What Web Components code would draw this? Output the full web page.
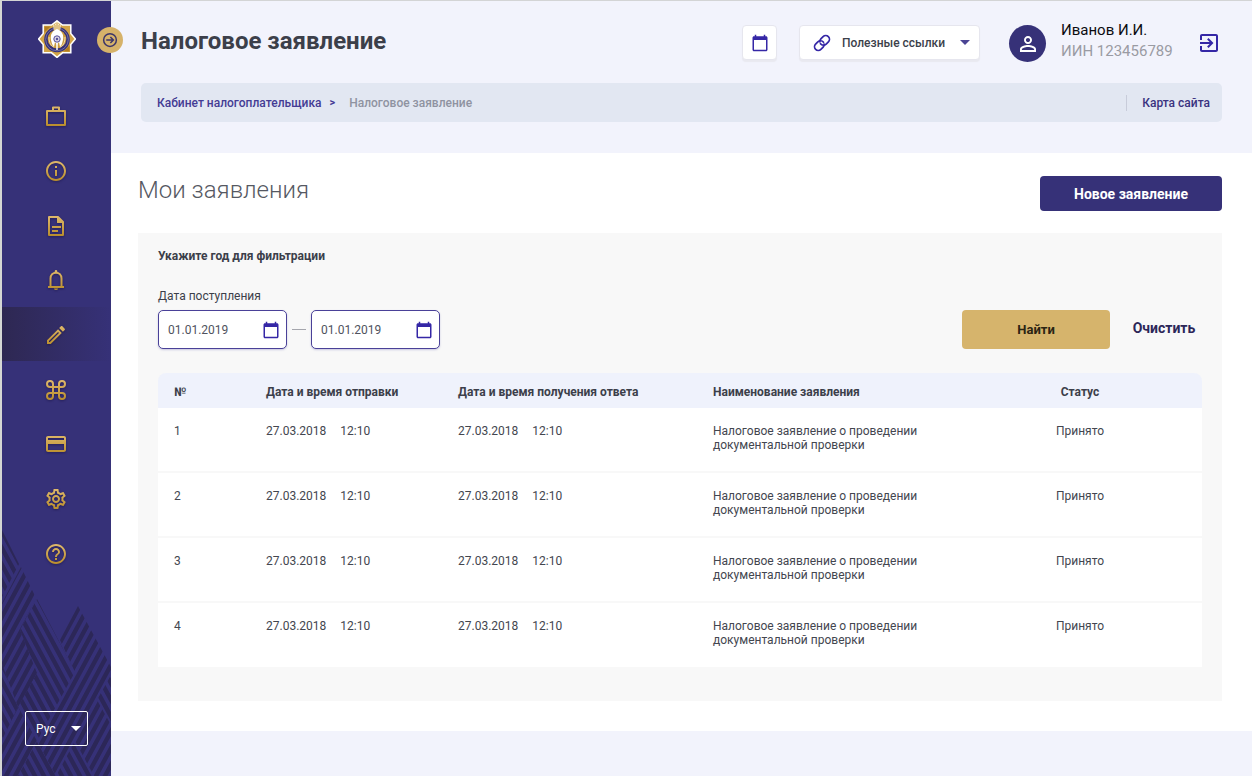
<!DOCTYPE html>
<html lang="ru">
<head>
<meta charset="utf-8">
<meta name="viewport" content="width=device-width, initial-scale=1">
<title>Налоговое заявление</title>
<style>
  body { margin: 0; background: #f2f3fc; font-family: Roboto, "Liberation Sans", sans-serif; color: #3c3f4a; }
</style>
</head>
<body>
<tax-app>
  <side-bar slot="side"></side-bar>
  <page-header slot="header" heading="Налоговое заявление"></page-header>
  <applications-page></applications-page>
</tax-app>

<script>
const define = (name, html, setup) => {
  const tpl = document.createElement('template');
  tpl.innerHTML = `<style>*{box-sizing:border-box}</style>` + html;
  customElements.define(name, class extends HTMLElement {
    connectedCallback() {
      if (this.shadowRoot) return;
      const root = this.attachShadow({ mode: 'open' });
      root.append(tpl.content.cloneNode(true));
      if (setup) setup.call(this, root);
    }
  });
};

/* Icons: G marks the paint, so each glyph can be filled flat or with the gold gradient. */
const ICONS = {
  bag: '<path fill="none" stroke="G" stroke-width="2" stroke-linejoin="round" d="M3 7h18v14H3zM9 7V3.500h6V7"/>',
  info: '<path fill="G" d="M11 7h2v2h-2zm0 4h2v6h-2zm1-9C6.480 2 2 6.480 2 12s4.480 10 10 10 10-4.480 10-10S17.520 2 12 2zm0 18c-4.410 0-8-3.590-8-8s3.590-8 8-8 8 3.590 8 8-3.590 8-8 8z"/>',
  doc: '<path fill="none" stroke="G" stroke-width="2" stroke-linejoin="round" d="M5 3h9l5 5v13H5z"/><path fill="G" d="M13 3v6h6.500zM8 12h9v2H8zM8 16h6v2H8z"/>',
  bell: '<path fill="none" stroke="G" stroke-width="2" d="M6.500 19V10.500C6.500 7 9 4.700 12 4.700s5.500 2.300 5.500 5.800V19"/><path fill="G" d="M10.700 5V3.300a1.300 1.300 0 0 1 2.600 0V5zM4 18h16v2H4zM10 20.500h4a2 1.500 0 0 1-4 0z"/>',
  pencil: '<path fill="G" d="M14.060 9.020l.920.920L5.920 19H5v-.920l9.060-9.060M17.660 3c-.250 0-.510.100-.700.290l-1.830 1.830 3.750 3.750 1.830-1.830c.390-.390.390-1.020 0-1.410l-2.340-2.340c-.200-.200-.450-.290-.710-.290zm-3.600 3.190L3 17.250V21h3.750L17.810 9.940l-3.750-3.750z"/>',
  command: '<path fill="none" stroke="G" stroke-width="2" d="M9 9H6a3 3 0 1 1 3-3v12a3 3 0 1 1-3-3h12a3 3 0 1 1-3 3V6a3 3 0 1 1 3 3z"/>',
  card: '<path fill="G" d="M20 4H4c-1.110 0-1.990.890-1.990 2L2 18c0 1.110.890 2 2 2h16c1.110 0 2-.890 2-2V6c0-1.110-.890-2-2-2zm0 14H4v-6h16v6zm0-10H4V6h16v2z"/>',
  gear: '<path fill="G" d="M19.430 12.980c.040-.320.070-.640.070-.980s-.030-.660-.070-.980l2.110-1.650c.190-.150.240-.420.120-.640l-2-3.460c-.090-.160-.260-.250-.440-.250-.060 0-.120.010-.170.030l-2.490 1c-.520-.400-1.080-.730-1.690-.980l-.380-2.650C14.460 2.180 14.250 2 14 2h-4c-.250 0-.460.180-.490.420l-.380 2.650c-.610.250-1.170.590-1.690.980l-2.490-1c-.060-.020-.120-.030-.180-.030-.170 0-.340.090-.430.250l-2 3.460c-.130.220-.070.490.120.640l2.110 1.650c-.040.320-.070.650-.070.980s.030.660.070.980l-2.110 1.650c-.190.150-.240.420-.120.640l2 3.460c.090.160.260.250.440.250.060 0 .120-.010.170-.030l2.490-1c.520.400 1.080.730 1.690.980l.380 2.650c.030.240.240.420.490.420h4c.250 0 .460-.180.490-.420l.380-2.650c.610-.250 1.170-.590 1.690-.980l2.490 1c.060.020.120.030.180.030.170 0 .340-.090.430-.250l2-3.460c.120-.220.070-.490-.120-.640l-2.110-1.650zm-1.980-1.710c.040.310.050.520.050.730s-.020.430-.050.730l-.140 1.130.890.700 1.080.840-.700 1.210-1.270-.510-1.040-.420-.900.680c-.430.320-.840.560-1.250.730l-1.060.430-.160 1.130-.200 1.350h-1.400l-.190-1.350-.160-1.130-1.060-.430c-.430-.180-.830-.410-1.230-.710l-.910-.700-1.060.430-1.270.510-.700-1.210 1.080-.840.890-.700-.140-1.130c-.030-.310-.050-.540-.050-.740s.020-.430.050-.730l.140-1.130-.890-.700-1.080-.840.700-1.210 1.270.510 1.040.420.900-.680c.430-.320.840-.560 1.250-.730l1.060-.430.160-1.130.200-1.350h1.390l.190 1.350.160 1.130 1.060.430c.430.180.830.410 1.230.710l.910.700 1.060-.430 1.270-.510.700 1.210-1.070.850-.890.700.140 1.130zM12 8c-2.210 0-4 1.790-4 4s1.790 4 4 4 4-1.790 4-4-1.790-4-4-4zm0 6c-1.100 0-2-.900-2-2s.900-2 2-2 2 .900 2 2-.900 2-2 2z"/>',
  help: '<path fill="G" d="M11 18h2v-2h-2v2zm1-16C6.480 2 2 6.480 2 12s4.480 10 10 10 10-4.480 10-10S17.520 2 12 2zm0 18c-4.410 0-8-3.590-8-8s3.590-8 8-8 8 3.590 8 8-3.590 8-8 8zm0-14c-2.210 0-4 1.790-4 4h2c0-1.100.900-2 2-2s2 .900 2 2c0 2-3 1.750-3 5h2c0-2.250 3-2.500 3-5 0-2.210-1.790-4-4-4z"/>',
  calendar: '<path fill="G" d="M20 3h-1V1h-2v2H7V1H5v2H4c-1.100 0-2 .900-2 2v16c0 1.100.900 2 2 2h16c1.100 0 2-.900 2-2V5c0-1.100-.900-2-2-2zm0 18H4V8h16v13z"/>',
  link: '<g fill="none" stroke="G" stroke-width="2.300" stroke-linecap="round"><path d="M10 13a5 5 0 0 0 7.540.540l3-3a5 5 0 0 0-7.070-7.070l-3 3a5 5 0 0 0-1.300 4"/><path d="M14 11a5 5 0 0 0-7.540-.540l-3 3a5 5 0 0 0 7.070 7.070l3-3a5 5 0 0 0 1.300-4"/></g>',
  person: '<path fill="G" d="M12 5.900c1.160 0 2.100.940 2.100 2.100s-.940 2.100-2.100 2.100S9.900 9.160 9.900 8s.940-2.100 2.100-2.100m0 9c2.970 0 6.100 1.460 6.100 2.100v1.100H5.900V17c0-.640 3.130-2.100 6.100-2.100M12 4C9.790 4 8 5.790 8 8s1.790 4 4 4 4-1.790 4-4-1.790-4-4-4zm0 9c-2.670 0-8 1.340-8 4v3h16v-3c0-2.660-5.330-4-8-4z"/>',
  exit: '<path fill="G" d="M10.090 15.590L11.500 17l5-5-5-5-1.410 1.410L12.670 11H3v2h9.670l-2.580 2.590zM19 3H5c-1.110 0-2 .900-2 2v4h2V5h14v14H5v-4H3v4c0 1.100.890 2 2 2h14c1.100 0 2-.900 2-2V5c0-1.100-.900-2-2-2z"/>',
  arrow: '<circle cx="12" cy="12" r="8.500" fill="none" stroke="G" stroke-width="2"/><path fill="none" stroke="G" stroke-width="2" d="M7 12h9M12.500 8l4 4-4 4"/>'
};

define('ui-icon', `
  <style>
    :host { display: block; width: 24px; height: 24px; flex: none; }
    :host([gold]) { filter: drop-shadow(0 1px 1px rgba(20,14,60,.5)); }
    svg { display: block; width: 100%; height: 100%; }
  </style><svg viewBox="0 0 24 24" aria-hidden="true"></svg>`, function (root) {
  const gold = this.hasAttribute('gold');
  const defs = gold ? '<defs><linearGradient id="gold" gradientUnits="userSpaceOnUse" x1="0" y1="2" x2="0" y2="22"><stop offset="0" stop-color="#dfb96c"/><stop offset="1" stop-color="#b98d2c"/></linearGradient></defs>' : '';
  root.querySelector('svg').innerHTML = defs + ICONS[this.getAttribute('name')].replaceAll('"G"', gold ? '"url(#gold)"' : '"currentColor"');
});

define('tax-app', `
  <style>
    :host { display: grid; grid-template-columns: 109px minmax(0, 1fr); min-height: 100vh; border-left: 2px solid #d5d7d4; border-top: 1px solid #d3d4d5; box-sizing: border-box; }
    ::slotted([slot=side]) { grid-row: 1; }
    .content { min-width: 0; }
  </style>
  <slot name="side"></slot>
  <div class="content"><slot name="header"></slot><slot></slot></div>`);

define('tax-emblem', `
  <style>:host { display: block; width: 38px; height: 38px; } svg { display: block; }</style>
  <svg viewBox="0 0 38 38" width="38" height="38" role="img" aria-label="Эмблема">
    <path fill="#d2a447" stroke="#fff" stroke-width="1.500" d="M19 .8L24.500 5H32.800V13.500L37.400 19L32.800 24.500V32.800H24.500L19 37.400L13.500 32.800H5.200V24.500L.6 19L5.200 13.500V5H13.500z"/>
    <path d="M6.500 6.500l6 0-6 6zM31.500 31.500v-6l-6 6z" fill="#b37d20"/>
    <circle cx="19" cy="19.500" r="12.800" fill="#363178"/>
    <circle cx="19" cy="19.500" r="11.300" fill="none" stroke="#8d86b4" stroke-width=".7"/>
    <circle cx="19" cy="19" r="9.300" fill="#c99a3d"/>
    <path d="M19 1.500l2.500 3.500 1.500-1-.8 6h-6.400l-.8-6 1.500 1z" fill="#f7e9c5"/>
    <path d="M17 5v6M19 3v8M21 5v6" stroke="#c08c2c" stroke-width=".8"/>
    <path d="M19 9c3 1 5 3 6 6 .8 4-.5 6-1 9l-2 3-1-5-2 3-2-3-1 5-2-3c-.5-3-1.800-5-1-9 1-3 3-5 6-6z" fill="#fff"/>
    <path d="M11 17c0 6 2 9 5 10M27 17c0 6-2 9-5 10" stroke="#f3dfae" fill="none"/>
    <circle cx="19" cy="19" r="3.200" fill="#d9d3e4" stroke="#56509a"/>
    <circle cx="19" cy="19" r="1.200" fill="#56509a"/>
    <path d="M19 24v6" stroke="#fff" stroke-width="1.500"/>
  </svg>`);

define('mountain-pattern', `
  <style>:host { display: block; } svg { display: block; }</style>
  <svg viewBox="2 0 109 251" width="109" height="251" aria-hidden="true">
    <defs>
      <pattern id="down" width="9" height="9" patternUnits="userSpaceOnUse" patternTransform="matrix(1 0 .540 1 -4 0)"><rect width="5" height="9" fill="#2c2758"/></pattern>
      <pattern id="up" width="9" height="9" patternUnits="userSpaceOnUse" patternTransform="matrix(1 0 -.540 1 4 0)"><rect width="5" height="9" fill="#2c2758"/></pattern>
    </defs>
    <g fill="url(#down)">
      <path d="M2 5l17 34L2 72z"/>
      <path d="M37 74l38 73-38 69-19-34 19-34-17-43z"/>
      <path d="M2 139l16 43-16 33zM37 216l19 35H18zM75 216l19 35H56zM111 150v50l-14-25z"/>
    </g>
    <g fill="url(#up)">
      <path d="M21 42l15 31-16 32 17 43-19 34L2 139V78z"/>
      <path d="M18 182l19 34-19 35H2v-36z"/>
      <path d="M78 81l33 61v8l-14 25 14 25v51H94l-19-35-19 35-19-35 38-69-15-32z"/>
    </g>
  </svg>`);

define('side-bar', `
  <style>
    :host { display: flex; flex-direction: column; position: relative; background: #363178; }
    .art { position: absolute; left: 0; bottom: 0; }
    tax-emblem { margin: 19px 0 0 36px; }
    .toggle { position: absolute; top: 26px; right: -12px; width: 26px; height: 26px; padding: 4px; border: 0; border-radius: 50%; background: #d6b26a; color: #3c3569; z-index: 2; }
    .toggle ui-icon { width: 18px; height: 18px; }
    nav { position: relative; display: grid; grid-template-rows: repeat(9, 1fr); height: 492px; margin-top: 30px; }
    nav a { display: grid; place-items: center; padding: 2px 2px 0 0; }
    nav a[aria-current] { background: linear-gradient(90deg, #2e2852, #363178); }
    .lang { position: relative; width: 63px; margin: auto 0 30px 23px; padding-top: 24px; }
    select { display: block; width: 63px; height: 35px; padding: 0 10px; appearance: none; border: 1px solid #fff; border-radius: 2px; background: none; font: 12px Roboto, sans-serif; color: #fff; }
    option { color: #333; }
    .lang i { position: absolute; right: 7px; bottom: 15px; border: 5px solid transparent; border-top-color: #fff; border-bottom: 0; pointer-events: none; }
  </style>
  <mountain-pattern class="art"></mountain-pattern>
  <tax-emblem></tax-emblem>
  <button class="toggle" aria-label="Развернуть меню"><ui-icon name="arrow"></ui-icon></button>
  <nav aria-label="Разделы"></nav>
  <div class="lang"><select aria-label="Язык"><option>Рус</option></select><i></i></div>`, function (root) {
  const items = [['bag', 'Кабинет'], ['info', 'Информация'], ['doc', 'Документы'], ['bell', 'Уведомления'], ['pencil', 'Заявления'], ['command', 'Сервисы'], ['card', 'Платежи'], ['gear', 'Настройки'], ['help', 'Помощь']];
  root.querySelector('nav').innerHTML = items.map(([icon, label]) =>
    `<a href="#${icon}" aria-label="${label}"${icon === 'pencil' ? ' aria-current="page"' : ''}><ui-icon gold name="${icon}"></ui-icon></a>`).join('');
});

define('page-header', `
  <style>
    :host { display: block; padding: 24px 30px 31px; }
    .top { display: flex; align-items: center; height: 37px; }
    h1 { margin: 0 auto 0 0; padding-bottom: 6px; font-size: 24px; line-height: 28px; font-weight: 700; }
    .box { margin-bottom: 2px; border: 1px solid #e6e6ee; border-radius: 4px; background: #fff; box-shadow: 0 2px 1px #e9e9f0; color: #3527a6; }
    .cal { display: grid; place-items: center; width: 35px; height: 35px; padding: 0; margin-right: 22px; }
    .cal ui-icon { width: 18px; height: 18px; }
    .links { position: relative; display: flex; align-items: center; width: 181px; height: 35px; margin-right: 29px; }
    .links ui-icon { position: absolute; left: 13px; width: 18px; height: 18px; pointer-events: none; }
    select { appearance: none; width: 100%; height: 100%; padding: 0 24px 0 42px; border: 0; background: none; font: 500 12px Roboto, sans-serif; color: #3c3f4a; }
    .links i { position: absolute; right: 9px; border: 5px solid transparent; border-top-color: #4a4494; border-bottom: 0; pointer-events: none; }
    .avatar { display: grid; place-items: center; width: 37px; height: 37px; margin-right: 15px; border-radius: 50%; background: #363178; color: #fff; }
    .user { width: 136px; font-size: 15px; line-height: 21px; color: #0c0c10; padding-bottom: 5px; }
    .user span { display: block; color: #9a9ba3; }
    .exit { color: #3527a6; }
    .exit ui-icon { margin: 0 1px 2px 0; }
    .avatar ui-icon { width: 24px; height: 24px; }
    nav { display: flex; align-items: center; height: 39px; margin-top: 21px; padding: 0 12px 0 16px; border-radius: 5px; background: #e2e7f2; font-size: 12px; line-height: 16px; font-weight: 500; color: #8f93a1; }
    nav a { color: #443c94; text-decoration: none; }
    nav b { margin: 0 14px 0 8px; font-size: 11px; font-weight: 700; color: #443c94; }
    .map { margin-left: auto; padding-left: 15px; border-left: 1px solid #c8ccda; color: #3a3380; }
  </style>
  <div class="top">
    <h1></h1>
    <button class="box cal" aria-label="Календарь"><ui-icon name="calendar"></ui-icon></button>
    <div class="box links"><ui-icon name="link"></ui-icon><select aria-label="Полезные ссылки"><option>Полезные ссылки</option></select><i></i></div>
    <div class="avatar"><ui-icon name="person"></ui-icon></div>
    <div class="user">Иванов И.И.<span>ИИН 123456789</span></div>
    <a class="exit" href="#exit" aria-label="Выйти"><ui-icon name="exit"></ui-icon></a>
  </div>
  <nav aria-label="Навигация"><a href="#home">Кабинет налогоплательщика</a><b>&gt;</b><span></span><a class="map" href="#map">Карта сайта</a></nav>`, function (root) {
  const t = this.getAttribute('heading');
  root.querySelector('h1').textContent = t;
  root.querySelector('nav span').textContent = t;
});

define('date-field', `
  <style>
    :host { display: flex; align-items: center; width: 129px; height: 39px; border: 1px solid #4a4198; border-radius: 5px; background: #fff; box-shadow: 0 1px 2px rgba(60,50,150,.25); box-sizing: border-box; padding-right: 6px; }
    input { flex: 1; min-width: 0; height: 100%; padding: 0 0 0 9px; border: 0; background: none; font: 12px Roboto, sans-serif; color: #50535e; }
    button { padding: 0; border: 0; background: none; color: #3527a6; }
    ui-icon { width: 18px; height: 18px; }
  </style>
  <input type="text"><button aria-label="Выбрать дату"><ui-icon name="calendar"></ui-icon></button>`, function (root) {
  const input = root.querySelector('input');
  input.value = this.getAttribute('value');
  input.setAttribute('aria-label', this.getAttribute('label'));
});

define('ui-button', `
  <style>
    :host { display: block; }
    button { width: 100%; height: 100%; padding: 0; border: 0; border-radius: 4px; background: none; font: 700 14px Roboto, sans-serif; color: #2c2758; }
    :host([kind=primary]) button { background: #363178; color: #fff; }
    :host([kind=gold]) button { background: #d6b46c; color: #2b2413; font-size: 13px; }
  </style><button><slot></slot></button>`);

define('applications-table', `
  <style>
    :host { display: block; }
    table { width: 100%; table-layout: fixed; border-collapse: separate; border-spacing: 0; font-size: 12px; line-height: 14px; }
    th { height: 35px; padding: 2px 0 0 16px; background: #eff2fc; font-weight: 700; text-align: left; }
    th:first-child { border-top-left-radius: 8px; }
    th:last-child { border-top-right-radius: 8px; }
    td { height: 65px; padding: 16px 0 0 16px; vertical-align: top; background: #fff; border-bottom: 2px solid #f8f8f8; color: #43464f; }
    tr:last-child td { height: 64px; border: 0; }
    time + time { margin-left: 14px; }
    th:last-child, td:last-child { padding-left: 0; text-align: center; }
    .n { width: 92px; } .sent { width: 192px; } .reply { width: 255px; } .status { width: 244px; }
    p { margin: 0; max-width: 220px; }
  </style>
  <table>
    <colgroup><col class="n"><col class="sent"><col class="reply"><col><col class="status"></colgroup>
    <thead><tr><th>№</th><th>Дата и время отправки</th><th>Дата и время получения ответа</th><th>Наименование заявления</th><th>Статус</th></tr></thead>
    <tbody></tbody>
  </table>`, function (root) {
  const stamp = '<time>27.03.2018</time><time>12:10</time>';
  root.querySelector('tbody').innerHTML = [1, 2, 3, 4].map(n =>
    `<tr><td>${n}</td><td>${stamp}</td><td>${stamp}</td><td><p>Налоговое заявление о проведении документальной проверки</p></td><td>Принято</td></tr>`).join('');
});

define('applications-page', `
  <style>
    :host { display: block; padding: 23px 30px 30px 27px; background: #fff; }
    .head { display: flex; justify-content: space-between; align-items: flex-start; height: 57px; }
    h2 { margin: 0; font-size: 24px; line-height: 28px; font-weight: 300; color: #555862; }
    .new { width: 182px; height: 35px; }
    .panel { padding: 15px 20px 34px; background: #f8f8f8; }
    h3 { margin: 0 0 24px; font-size: 12px; line-height: 16px; font-weight: 700; }
    .label { margin-bottom: 6px; font-size: 12px; line-height: 16px; }
    .filter { display: flex; align-items: center; margin-bottom: 24px; }
    .dash { width: 14px; height: 1px; margin: 0 5px; background: #a5a6ad; }
    .find { width: 148px; height: 39px; margin-left: auto; }
    .clear { box-sizing: border-box; width: 108px; height: 39px; margin-right: -16px; padding-bottom: 3px; }
  </style>
  <div class="head"><h2>Мои заявления</h2><ui-button class="new" kind="primary">Новое заявление</ui-button></div>
  <section class="panel">
    <h3>Укажите год для фильтрации</h3>
    <div class="label">Дата поступления</div>
    <div class="filter">
      <date-field value="01.01.2019" label="Дата поступления с"></date-field><span class="dash"></span><date-field value="01.01.2019" label="Дата поступления по"></date-field>
      <ui-button class="find" kind="gold">Найти</ui-button><ui-button class="clear">Очистить</ui-button>
    </div>
    <applications-table></applications-table>
  </section>`);
</script>
</body>
</html>
